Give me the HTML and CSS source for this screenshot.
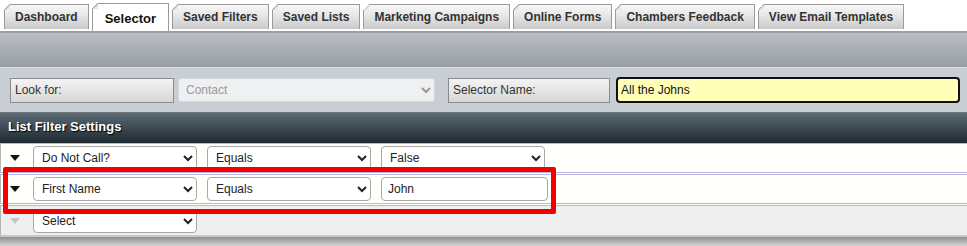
FILE: index.html
```html
<!DOCTYPE html>
<html lang="en">
<head>
    <meta charset="UTF-8">
    <title>Selector</title>
    <link rel="stylesheet" href="styles.css">
</head>
<body>
    <div class="tabs">
        <div class="tab">Dashboard</div>
        <div class="tab active">Selector</div>
        <div class="tab">Saved Filters</div>
        <div class="tab">Saved Lists</div>
        <div class="tab">Marketing Campaigns</div>
        <div class="tab">Online Forms</div>
        <div class="tab">Chambers Feedback</div>
        <div class="tab">View Email Templates</div>
    </div>

    <div class="toolbar"></div>

    <div class="criteria">
        <div class="label-box look">Look for:</div>
        <select class="look-select" disabled>
            <option>Contact</option>
        </select>
        <div class="label-box name">Selector Name:</div>
        <input class="name-input" type="text" value="All the Johns">
    </div>

    <div class="filters">
        <div class="filters-head">List Filter Settings</div>

        <div class="filter-row">
            <span class="toggle"><svg width="10" height="6" viewBox="0 0 10 6"><path d="M0 0H10L5 6Z" fill="#111"/></svg></span>
            <select class="field"><option>Do Not Call?</option></select>
            <select class="field"><option>Equals</option></select>
            <select class="field"><option>False</option></select>
        </div>

        <div class="filter-row">
            <span class="toggle"><svg width="10" height="6" viewBox="0 0 10 6"><path d="M0 0H10L5 6Z" fill="#111"/></svg></span>
            <select class="field"><option>First Name</option></select>
            <select class="field"><option>Equals</option></select>
            <input class="field value" type="text" value="John">
        </div>

        <div class="filter-row empty">
            <span class="toggle"><svg width="10" height="6" viewBox="0 0 10 6"><path d="M0 0H10L5 6Z" fill="#c4c4c4"/></svg></span>
            <select class="field"><option>Select</option></select>
        </div>

        <div class="filters-foot"></div>

        <div class="highlight"></div>
    </div>
</body>
</html>
```

FILE: styles.css
```css
body {
    margin: 0;
    width: 967px;
    font-family: "Liberation Sans", Arial, sans-serif;
    font-size: 12px;
    color: #222;
    background: #fff;
    overflow: hidden;
}

.tabs {
    display: flex;
    align-items: flex-end;
    gap: 3px;
    height: 31px;
    padding-left: 4px;
    box-sizing: border-box;
}

.tab {
    position: relative;
    height: 25px;
    padding: 0 10px;
    box-sizing: border-box;
    border: 1px solid #9a9a9a;
    border-bottom: none;
    background: linear-gradient(#f7f7f7 0%, #e6e6e6 45%, #c9c9c9 100%);
    font-weight: bold;
    font-size: 12px;
    color: #333;
    text-align: center;
    line-height: 25px;
    margin-bottom: 2px;
}

.tab::before {
    content: "";
    position: absolute;
    left: -1px;
    top: -1px;
    width: 6px;
    height: 6px;
    background: linear-gradient(135deg, #fff 50%, #b0b0b0 50%, #e8e8e8 70%);
}

.tab.active {
    height: 28px;
    padding: 0 12px;
    margin-bottom: 0;
    background: #fff;
    line-height: 29px;
    font-size: 13px;
    color: #111;
}

.toolbar {
    height: 34px;
    border-top: 2px solid #9c9c9c;
    background: linear-gradient(#b9bfc4 0%, #a7adb3 50%, #979ea5 100%);
    border-bottom: 1px solid #dde1e4;
}

.criteria {
    display: flex;
    align-items: center;
    height: 44px;
    padding-left: 10px;
    background: #c8ced3;
    border-bottom: 1px solid #6e767c;
}

.label-box {
    height: 25px;
    box-sizing: border-box;
    border: 1px solid #8a8a8a;
    background: linear-gradient(#f4f4f4, #d6d6d6);
    line-height: 23px;
    padding-left: 4px;
    color: #333;
}

.label-box.look {
    width: 164px;
}

.label-box.name {
    width: 162px;
    margin-left: 13px;
}

.look-select {
    width: 257px;
    height: 24px;
    margin-left: 4px;
    border: 1px solid #d4d8dc;
    border-radius: 3px;
    background: #eef0f2;
    color: #999;
    font: 12px "Liberation Sans", Arial, sans-serif;
    padding-left: 3px;
    opacity: 1;
}

.name-input {
    width: 344px;
    height: 26px;
    margin-left: 6px;
    box-sizing: border-box;
    border: 2px solid #111;
    border-radius: 4px;
    background: #ffffb9;
    font: 12px "Liberation Sans", Arial, sans-serif;
    color: #111;
    padding: 0 3px;
    outline: none;
}

.filters {
    position: relative;
}

.filters-head {
    height: 30px;
    line-height: 28px;
    padding-left: 8px;
    font-size: 13px;
    font-weight: bold;
    color: #fff;
    text-shadow: 1px 1px 1px #000;
    background: linear-gradient(#5b6a73 0%, #3c4a53 50%, #1e2930 100%);
}

.filter-row {
    display: flex;
    align-items: center;
    gap: 10px;
    height: 28px;
    background: #fffffc;
    border-left: 1px solid #b5b5b5;
    border-top: 1px solid #b8b4dc;
    border-bottom: 1px solid #b8b4dc;
    margin-bottom: 1px;
}

.filter-row.empty {
    height: 29px;
    background: #efefef;
    border-bottom: 2px solid #c8c8c8;
    margin-bottom: 0;
}

.toggle {
    display: flex;
    justify-content: center;
    width: 20px;
    margin-right: -2px;
    padding-left: 4px;
}

.field {
    width: 164px;
    height: 24px;
    box-sizing: border-box;
    border: 1px solid #a8a8a8;
    border-radius: 4px;
    background: #fff;
    font: 12px "Liberation Sans", Arial, sans-serif;
    color: #222;
    padding-left: 4px;
}

input.field {
    width: 167px;
    padding-left: 6px;
    outline: none;
}

.filters-foot {
    height: 9px;
    background: linear-gradient(#8e8e8e, #b8b8b8 60%, #d4d4d4);
}

.highlight {
    position: absolute;
    left: 3px;
    top: 54px;
    width: 553px;
    height: 47px;
    box-sizing: border-box;
    border: 5px solid #f20000;
    border-radius: 2px;
}
```
